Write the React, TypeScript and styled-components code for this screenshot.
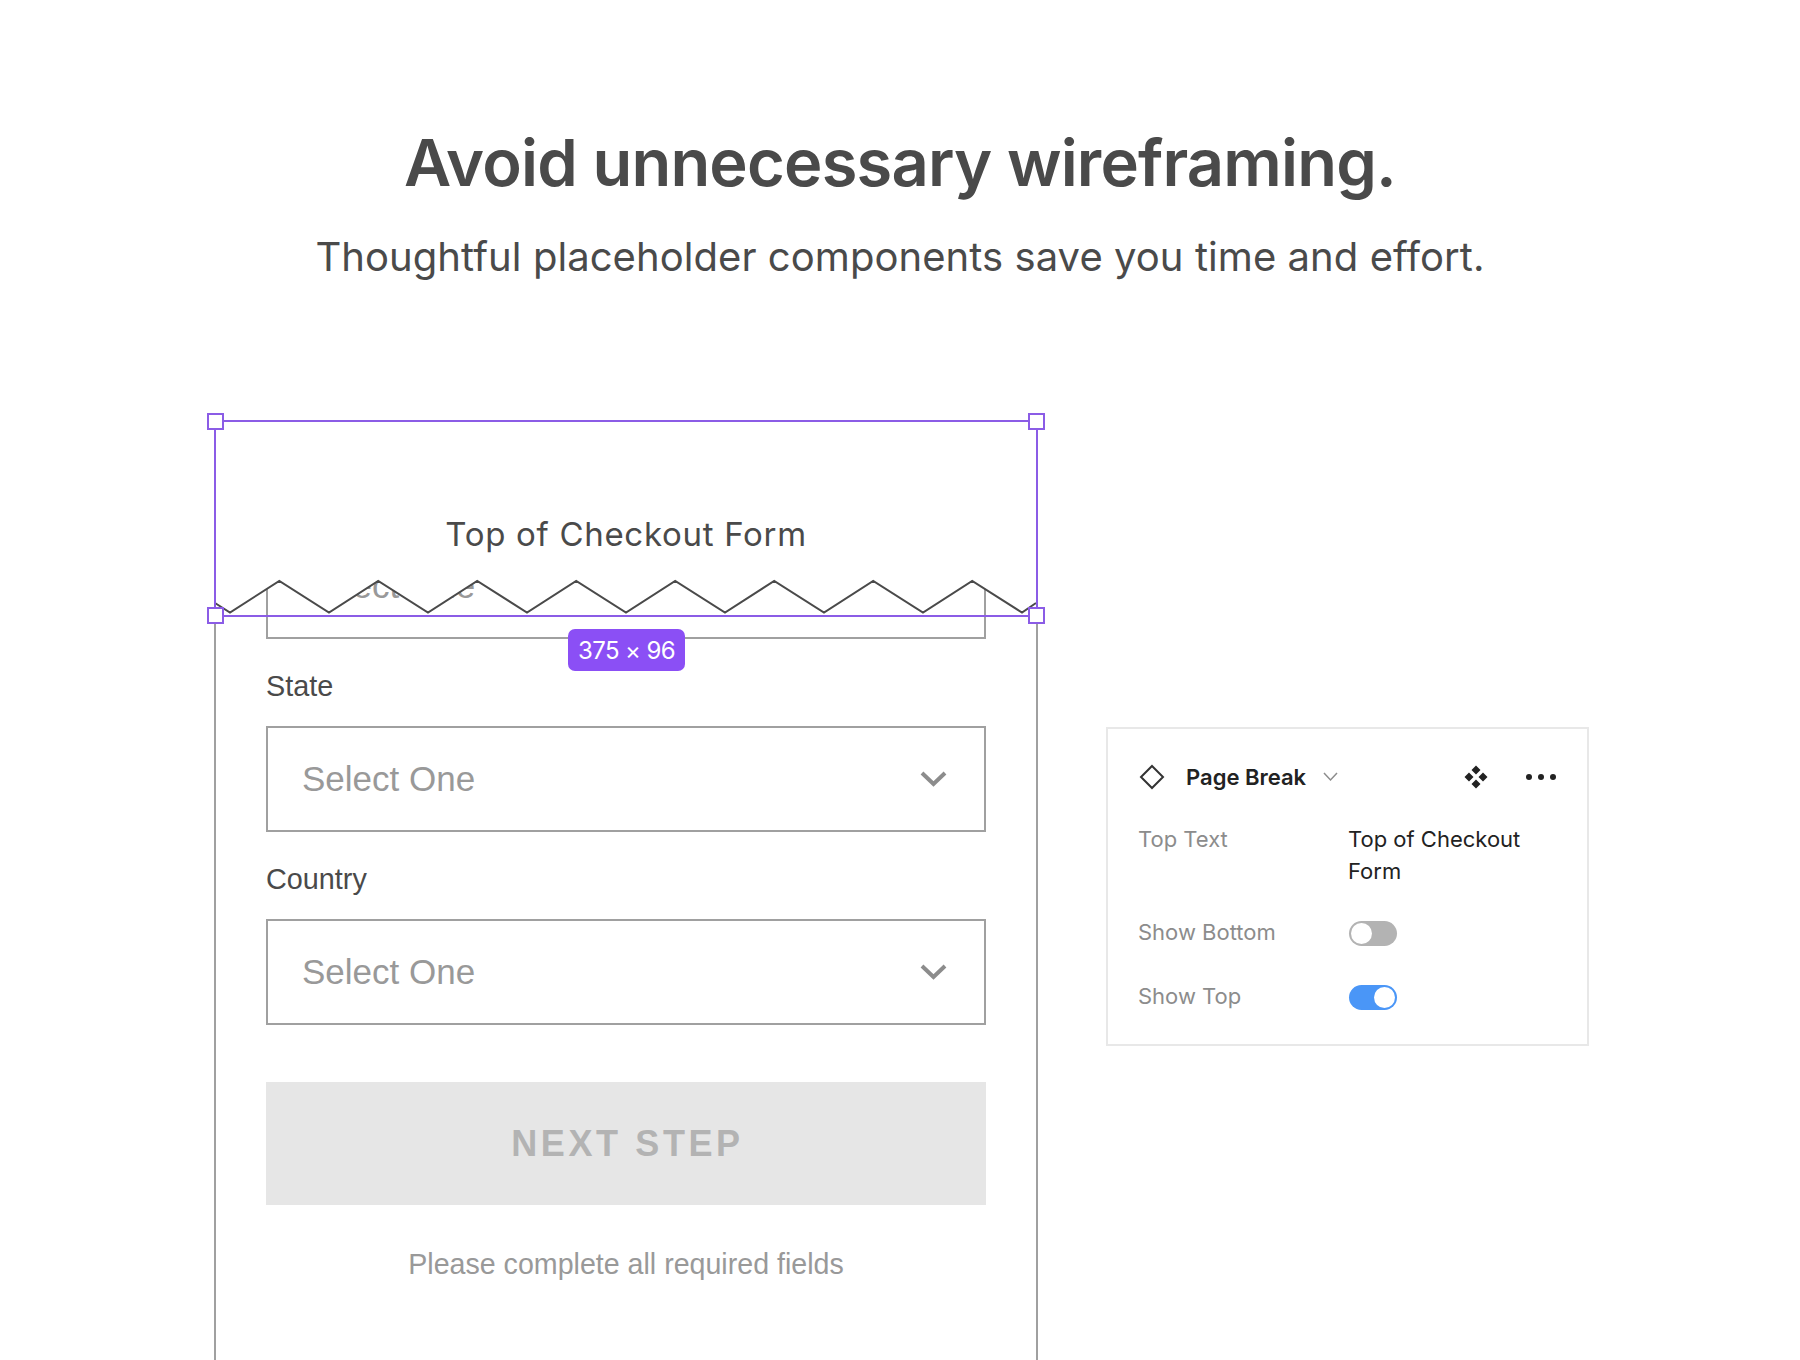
import styled, { createGlobalStyle } from "styled-components";

const GlobalStyle = createGlobalStyle`
  html, body {
    margin: 0;
    padding: 0;
    background: #fff;
  }
`;

const Page = styled.div`
  width: 1800px;
  height: 1360px;
  overflow: hidden;
  background: #fff;
  display: flex;
  flex-direction: column;
  color: #4a4a4a;
`;

const Hero = styled.header`
  height: 420px;
  padding-top: 126px;
  box-sizing: border-box;
  text-align: center;
`;

const Title = styled.h1`
  margin: 0;
  font-family: Inter, sans-serif;
  font-size: 65px;
  line-height: 74px;
  font-weight: 600;
  letter-spacing: -0.82px;
`;

const Subtitle = styled.p`
  margin: 32px 0 0;
  font-family: Inter, sans-serif;
  font-size: 40px;
  line-height: 50px;
  font-weight: 400;
  letter-spacing: 0.06px;
`;

const Stage = styled.main`
  display: flex;
  align-items: flex-start;
  padding-left: 214px;
`;

const Artboard = styled.section`
  position: relative;
  width: 824px;
  height: 940px;
  box-sizing: border-box;
  border-left: 2px solid #a0a0a0;
  border-right: 2px solid #a0a0a0;
  padding: 113px 50px 0;
`;

const Field = styled.div`
  display: flex;
  flex-direction: column;
`;

const Label = styled.label`
  font-family: "Liberation Sans", Arial, sans-serif;
  font-size: 28.8px;
  line-height: 34px;
  color: #4a4a4a;
  padding: 30px 0 23px;
`;

const Select = styled.div`
  height: 106px;
  box-sizing: border-box;
  border: 2px solid #a0a0a0;
  padding: 0 37px 1px 34px;
  display: flex;
  align-items: center;
  justify-content: space-between;
  font-family: "Liberation Sans", Arial, sans-serif;
  font-size: 35px;
  color: #999;
`;

const Chevron = styled.svg`
  width: 27px;
  height: 16px;
  fill: none;
  stroke: #8c8c8c;
  stroke-width: 4;
`;

const NextButton = styled.button`
  display: block;
  width: 100%;
  height: 123px;
  margin-top: 57px;
  padding: 0 0 0 3px;
  border: 0;
  background: #e6e6e6;
  font-family: "Liberation Sans", Arial, sans-serif;
  font-size: 36px;
  font-weight: 700;
  letter-spacing: 3.6px;
  color: #b3b3b3;
`;

const Hint = styled.p`
  margin: 41px 0 0;
  text-align: center;
  font-family: "Liberation Sans", Arial, sans-serif;
  font-size: 28.6px;
  line-height: 36px;
  color: #999;
`;

const BreakHeader = styled.div`
  position: absolute;
  left: -2px;
  top: 0;
  width: 824px;
  height: 197px;
`;

const BreakLabel = styled.div`
  position: absolute;
  left: 0;
  right: 0;
  top: 92px;
  text-align: center;
  font-family: Inter, sans-serif;
  font-size: 33px;
  line-height: 44px;
  letter-spacing: 0.7px;
  color: #4a4a4a;
`;

const Zigzag = styled.svg`
  position: absolute;
  left: 0;
  top: 0;
  width: 824px;
  height: 197px;
`;

const Selection = styled.div`
  position: absolute;
  inset: 0;
  box-sizing: border-box;
  border: 2px solid #8b5ce6;
`;

const Handle = styled.span<{ $right?: boolean; $bottom?: boolean }>`
  position: absolute;
  width: 17px;
  height: 17px;
  box-sizing: border-box;
  background: #fff;
  border: 2px solid #8b5ce6;
  left: ${(p) => (p.$right ? "814px" : "-7px")};
  top: ${(p) => (p.$bottom ? "187px" : "-7px")};
`;

const SizeBadge = styled.div`
  position: absolute;
  left: 354px;
  top: 209px;
  width: 117px;
  height: 42px;
  border-radius: 7px;
  background: #8b4ff5;
  color: #fff;
  display: flex;
  align-items: center;
  justify-content: center;
  font-family: Inter, sans-serif;
  font-size: 24px;
  letter-spacing: -0.6px;
`;

const Panel = styled.aside`
  width: 483px;
  height: 319px;
  box-sizing: border-box;
  margin: 307px 0 0 68px;
  border: 2px solid #e8e8e8;
  padding: 0 30px;
  font-family: Inter, sans-serif;
  font-size: 22px;
`;

const PanelHead = styled.div`
  height: 94px;
  box-sizing: border-box;
  padding-top: 1px;
  display: flex;
  align-items: center;
`;

const ComponentName = styled.span`
  flex: none;
  width: 121px;
  margin-left: 21px;
  font-weight: 600;
  white-space: nowrap;
  color: #222;
`;

const PanelIcon = styled.svg<{ $gap?: number }>`
  flex: none;
  margin-left: ${(p) => p.$gap ?? 0}px;
`;

const PropRow = styled.div<{ $height: number }>`
  display: grid;
  grid-template-columns: 210px 1fr;
  min-height: ${(p) => p.$height}px;
  align-items: start;
  line-height: 32px;
`;

const PropName = styled.span`
  color: #8c8c8c;
`;

const PropValue = styled.span`
  color: #222;
`;

const Toggle = styled.span<{ $on?: boolean }>`
  display: flex;
  justify-content: ${(p) => (p.$on ? "flex-end" : "flex-start")};
  margin: 5px 0 0 1px;
  width: 48px;
  height: 25px;
  box-sizing: border-box;
  padding: 2px;
  border-radius: 13px;
  background: ${(p) => (p.$on ? "#4a96f7" : "#b3b3b3")};
`;

const Knob = styled.span`
  width: 21px;
  height: 21px;
  border-radius: 50%;
  background: #fff;
`;

const ZIG_POINTS = [
  "215,603", "230,612.5", "279.3,581", "329,612.5", "378.2,581", "428,612.5",
  "477.2,581", "527,612.5", "576.2,581", "626,612.5", "675.2,581", "725,612.5",
  "774.2,581", "824,612.5", "873.2,581", "923,612.5", "972.2,581", "1022,612.5", "1036,603",
]
  .map((pair) => {
    const [x, y] = pair.split(",").map(Number);
    return `${x - 214},${y - 420}`;
  })
  .join(" ");

const SelectField = ({ label }: { label?: string }) => (
  <Field>
    {label && <Label>{label}</Label>}
    <Select>
      Select One
      <Chevron viewBox="0 0 27 16">
        <path d="M2 2 L13.5 13 L25 2" />
      </Chevron>
    </Select>
  </Field>
);

const App = () => {
  return (
    <Page>
      <GlobalStyle />
      <Hero>
        <Title>Avoid unnecessary wireframing.</Title>
        <Subtitle>Thoughtful placeholder components save you time and effort.</Subtitle>
      </Hero>
      <Stage>
        <Artboard>
          <SelectField />
          <SelectField label="State" />
          <SelectField label="Country" />
          <NextButton>NEXT STEP</NextButton>
          <Hint>Please complete all required fields</Hint>
          <BreakHeader>
            <Zigzag viewBox="0 0 824 197">
              <polygon points={`1,0 ${ZIG_POINTS} 822,0`} fill="#fff" />
              <polyline points={ZIG_POINTS} fill="none" stroke="#4a4a4a" strokeWidth="2" />
            </Zigzag>
            <BreakLabel>Top of Checkout Form</BreakLabel>
            <Selection />
            <Handle />
            <Handle $right />
            <Handle $bottom />
            <Handle $right $bottom />
            <SizeBadge>375 × 96</SizeBadge>
          </BreakHeader>
        </Artboard>
        <Panel>
          <PanelHead>
            <PanelIcon $gap={1} width="26" height="26" viewBox="0 0 26 26">
              <path d="M13 2 L24 13 L13 24 L2 13 Z" fill="none" stroke="#333" strokeWidth="2" />
            </PanelIcon>
            <ComponentName>Page Break</ComponentName>
            <PanelIcon $gap={15} width="17" height="11" viewBox="0 0 17 11">
              <path d="M2 2 L8.5 9 L15 2" fill="none" stroke="#8c8c8c" strokeWidth="1.5" />
            </PanelIcon>
            <PanelIcon $gap={125} width="24" height="24" viewBox="0 0 24 24">
              <path d="M12 0.5 L16.5 5 L12 9.5 L7.5 5 Z M5 7.5 L9.5 12 L5 16.5 L0.5 12 Z M19 7.5 L23.5 12 L19 16.5 L14.5 12 Z M12 14.5 L16.5 19 L12 23.5 L7.5 19 Z" fill="#222" />
            </PanelIcon>
            <PanelIcon $gap={37} width="34" height="8" viewBox="0 0 34 8">
              <circle cx="4" cy="4" r="3" fill="#222" />
              <circle cx="16" cy="4" r="3" fill="#222" />
              <circle cx="28" cy="4" r="3" fill="#222" />
            </PanelIcon>
          </PanelHead>
          <PropRow $height={93}>
            <PropName>Top Text</PropName>
            <PropValue>Top of Checkout Form</PropValue>
          </PropRow>
          <PropRow $height={64}>
            <PropName>Show Bottom</PropName>
            <Toggle>
              <Knob />
            </Toggle>
          </PropRow>
          <PropRow $height={40}>
            <PropName>Show Top</PropName>
            <Toggle $on>
              <Knob />
            </Toggle>
          </PropRow>
        </Panel>
      </Stage>
    </Page>
  );
};

export default App;
